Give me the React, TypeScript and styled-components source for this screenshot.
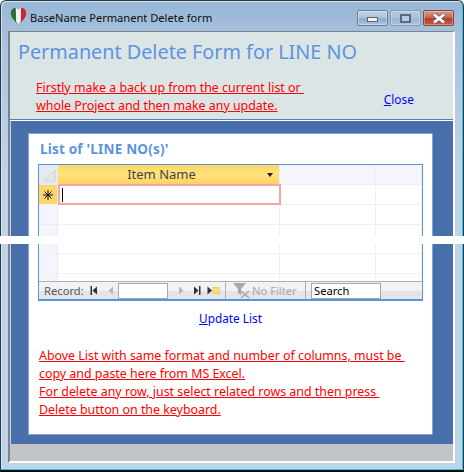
import styled, { createGlobalStyle } from 'styled-components';

const GlobalStyle = createGlobalStyle`
  html, body {
    margin: 0;
    padding: 0;
    background: #fff;
    overflow: hidden;
  }
  * {
    box-sizing: border-box;
  }
`;

const FONT = '"Noto Sans", "Open Sans", sans-serif';

const App = () => {
  return (
    <Window>
      <GlobalStyle />
      <TitleBar>
        <AppIcon viewBox="0 0 17 18">
          <path d="M8.5 17.5 C4 13.5 0.8 10.5 0.8 6 C0.8 3 2.8 1 5.2 1 C6.6 1 7.8 1.7 8.5 3 L8.5 17.5Z" fill="#2c6e35" />
          <path d="M5.8 1.1 C7 1.3 7.9 1.9 8.5 3 C9.1 1.9 10 1.3 11.2 1.1 L10.9 14.6 L8.5 17.5 L6.1 14.6Z" fill="#f4f4f0" />
          <path d="M8.5 17.5 C13 13.5 16.2 10.5 16.2 6 C16.2 3 14.2 1 11.8 1 L10.9 1.1 L10.9 14.6Z" fill="#c9282b" />
        </AppIcon>
        <WindowTitle>BaseName Permanent Delete form</WindowTitle>
        <WindowControls>
          <ControlButton>
            <MinimizeGlyph />
          </ControlButton>
          <ControlButton $faded>
            <MaximizeGlyph />
          </ControlButton>
          <ControlButton $danger>
            <svg width="16" height="11" viewBox="0 0 16 11">
              <path d="M3 1.5 L13 9.5 M13 1.5 L3 9.5" stroke="#6b6260" strokeWidth="4.4" />
              <path d="M3 1.5 L13 9.5 M13 1.5 L3 9.5" stroke="#fff" strokeWidth="2.8" />
            </svg>
          </ControlButton>
        </WindowControls>
      </TitleBar>

      <ClientArea>
        <FormHeader>
          <FormTitle>Permanent Delete Form for LINE NO</FormTitle>
          <HeaderRow>
            <div>
              <WarningLine>{'Firstly make a back up from the current list or '}</WarningLine>
              <WarningLine>whole Project and then make any update.</WarningLine>
            </div>
            <ActionLink>
              <u>C</u>lose
            </ActionLink>
          </HeaderRow>
        </FormHeader>

        <DetailSection>
          <Card>
            <ListTitle>List of 'LINE NO(s)'</ListTitle>
            <Datasheet>
              <HeaderGridRow>
                <CornerCell>
                  <svg width="18" height="18" viewBox="0 0 18 18">
                    <path d="M4 15 L15 4 L15 15Z" fill="#e4e6ea" stroke="#d0d3d8" />
                  </svg>
                </CornerCell>
                <ColumnHead>
                  Item Name
                  <SortArrow />
                </ColumnHead>
                <EmptyHead $width={96} />
                <EmptyHead />
              </HeaderGridRow>
              <GridRow $height={20}>
                <RowSelector $active>
                  <svg width="10" height="10" viewBox="0 0 10 10">
                    <path d="M5 0 V10 M0 5 H10 M1.5 1.5 L8.5 8.5 M8.5 1.5 L1.5 8.5" stroke="#111" strokeWidth="1" />
                  </svg>
                </RowSelector>
                <ActiveCell>
                  <Caret />
                </ActiveCell>
                <Cell $width={96} />
                <Cell />
              </GridRow>
              {[20, 29, 20, 7].map((height, i) => (
                <GridRow key={i} $height={height} $last={i === 3}>
                  <RowSelector />
                  <Cell $width={222} />
                  <Cell $width={96} />
                  <Cell />
                </GridRow>
              ))}
              <NavBar>
                <NavLabel>Record:</NavLabel>
                <NavIcon $dark $gap={9} viewBox="0 0 8 9">
                  <path d="M0.5 0 H2 V9 H0.5Z M7 0.5 V8.5 L2.5 4.5Z" />
                </NavIcon>
                <NavIcon $gap={3} viewBox="0 0 8 9">
                  <path d="M6 0.5 V8.5 L1.5 4.5Z" />
                </NavIcon>
                <RecordBox />
                <NavIcon $gap={8} viewBox="0 0 8 9">
                  <path d="M2 0.5 V8.5 L6.5 4.5Z" />
                </NavIcon>
                <NavIcon $dark $gap={6} viewBox="0 0 8 9">
                  <path d="M1 0.5 V8.5 L5.5 4.5Z M6 0 H7.5 V9 H6Z" />
                </NavIcon>
                <NewRecordIcon viewBox="0 0 13 9">
                  <path d="M0.5 0.5 V8.5 L5 4.5Z" fill="#2e3338" />
                  <rect x="5.5" y="1" width="7" height="7" fill="#f2c230" />
                  <path d="M5.5 3.3 H12.5 M5.5 5.7 H12.5 M7.8 1 V8 M10.2 1 V8" stroke="#fff3c0" strokeWidth="0.8" />
                </NewRecordIcon>
                <FilterSection>
                  <svg width="18" height="17" viewBox="0 0 18 17">
                    <path d="M0 1 H13 L8 7 V13 L5 11 V7Z" fill="#a6a8ab" />
                    <path d="M8 9 L16 16 M16 9 L8 16" stroke="#a6a8ab" strokeWidth="1.6" />
                  </svg>
                  No Filter
                </FilterSection>
                <SearchBox>Search</SearchBox>
              </NavBar>
            </Datasheet>
            <UpdateRow>
              <ActionLink>
                <u>U</u>pdate List
              </ActionLink>
            </UpdateRow>
            <Notes>
              <WarningLine>{'Above List with same format and number of columns, must be '}</WarningLine>
              <WarningLine>copy and paste here from MS Excel.</WarningLine>
              <WarningLine>{'For delete any row, just select related rows and then press '}</WarningLine>
              <WarningLine>Delete button on the keyboard.</WarningLine>
            </Notes>
          </Card>
        </DetailSection>
        <FormFooter />
      </ClientArea>
      <TornStrip />
    </Window>
  );
};

const Window = styled.div`
  position: relative;
  width: 464px;
  height: 472px;
  padding: 0 8px 7px 1px;
  display: flex;
  flex-direction: column;
  font-family: ${FONT};
  background: linear-gradient(#98b6d6 0, #a9c3de 40px, #bcd3e9 160px, #bcd4ea 100%);
  border: 1px solid #2b3640;
  border-bottom: 2px solid #0a0a0a;
  border-top-left-radius: 6px;
  border-top-right-radius: 6px;
  box-shadow: inset -1px -1px 0 #35c4e0, inset 1px 1px 0 #d5e3f0;
`;

const TitleBar = styled.div`
  height: 30px;
  flex: none;
  display: flex;
  align-items: center;
  padding-left: 8px;
`;

const AppIcon = styled.svg`
  width: 17px;
  height: 18px;
  flex: none;
`;

const WindowTitle = styled.div`
  margin-left: 3px;
  margin-top: 2px;
  font-size: 11.1px;
  color: #0c0c0c;
  white-space: nowrap;
`;

const WindowControls = styled.div`
  margin-left: auto;
  margin-top: 4px;
  margin-right: 1px;
  display: flex;
  gap: 2px;
`;

const ControlButton = styled.div<{ $danger?: boolean; $faded?: boolean }>`
  width: 31px;
  height: 16px;
  display: flex;
  align-items: center;
  justify-content: center;
  border: 1px solid ${(p) => (p.$danger ? '#7d4a44' : p.$faded ? '#8099b5' : '#65809c')};
  border-radius: 2px;
  background: ${(p) =>
    p.$danger
      ? 'linear-gradient(#d99a8c 0, #c9614e 50%, #b03a28 55%, #c8604c 100%)'
      : p.$faded
        ? 'linear-gradient(#b5cbe2 0, #a8c0da 50%, #9cb6d3 55%, #a8c4e0 100%)'
        : 'linear-gradient(#c1d4e8 0, #a9c1dc 50%, #8fabcb 55%, #a8c4e0 100%)'};
  box-shadow: inset 0 0 0 1px rgba(255, 255, 255, 0.3);
`;

const MinimizeGlyph = styled.span`
  width: 11px;
  height: 5px;
  margin-top: 3px;
  background: #f2f4f6;
  border: 1px solid #55677a;
`;

const MaximizeGlyph = styled.span`
  width: 11px;
  height: 9px;
  background: #b7cbe0;
  border: 2px solid #5a6b7e;
`;

const ClientArea = styled.div`
  flex: 1;
  margin-left: 6px;
  display: flex;
  flex-direction: column;
  border-top: 1px solid #7d8388;
  border-left: 2px solid #7d8388;
  border-right: 2px solid #fff;
  border-bottom: 2px solid #fff;
`;

const FormHeader = styled.div`
  height: 88px;
  flex: none;
  padding: 6px 0 0 8px;
  background: #dce5e6;
  border-bottom: 1px solid #5c7fa8;
`;

const FormTitle = styled.div`
  font-size: 19.8px;
  line-height: 28px;
  color: #5c94dd;
  white-space: nowrap;
`;

const HeaderRow = styled.div`
  margin-top: 13px;
  padding-left: 18px;
  display: flex;
  align-items: center;
`;

const WarningLine = styled.div`
  height: 18px;
  font-size: 12.4px;
  line-height: 17px;
  color: #ff0000;
  white-space: pre;
  text-decoration: underline;
`;

const ActionLink = styled.a`
  display: block;
  font-size: 11.8px;
  line-height: 16px;
  color: #0000ff;
  white-space: nowrap;
  cursor: pointer;
  ${HeaderRow} & {
    margin-left: 80px;
    margin-top: 4px;
  }
`;

const DetailSection = styled.div`
  flex: 1;
  display: flex;
  padding: 12px 21px 9px 17px;
  background: #486fa9;
  border-top: 1px solid #fff;
  border-left: 1px solid #c9d3de;
`;

const Card = styled.div`
  flex: 1;
  padding: 6px 9px 0;
  background: #fff;
  border: 1px solid #7ea6d8;
`;

const ListTitle = styled.div`
  height: 24px;
  padding-left: 2px;
  font-size: 13.5px;
  font-weight: 700;
  letter-spacing: 0.2px;
  line-height: 18px;
  color: #5c94dd;
`;

const Datasheet = styled.div`
  width: 385px;
  height: 137px;
  display: flex;
  flex-direction: column;
  border: 1px solid #5b93dc;
  border-bottom-width: 2px;
  background: #fff;
`;

const GridRow = styled.div<{ $height: number; $last?: boolean }>`
  height: ${(p) => p.$height}px;
  flex: none;
  display: flex;
  border-bottom: ${(p) => (p.$last ? 'none' : '1px solid #f0f0f2')};
`;

const HeaderGridRow = styled.div`
  height: 20px;
  flex: none;
  display: flex;
`;

const CornerCell = styled.div`
  width: 19px;
  flex: none;
  display: flex;
  align-items: center;
  justify-content: center;
  background: #e6e9ef;
`;

const ColumnHead = styled.div`
  position: relative;
  width: 222px;
  flex: none;
  padding-right: 14px;
  font-size: 13px;
  line-height: 19px;
  text-align: center;
  color: #444;
  background: linear-gradient(#fbd966, #ffe27d 50%, #fdd25c);
  border-right: 1px solid #eee;
`;

const SortArrow = styled.span`
  position: absolute;
  right: 6px;
  top: 8px;
  border-left: 3.5px solid transparent;
  border-right: 3.5px solid transparent;
  border-top: 4px solid #222;
`;

const EmptyHead = styled.div<{ $width?: number }>`
  ${(p) => (p.$width ? `width: ${p.$width}px; flex: none;` : 'flex: 1;')}
  background: #f5f6fd;
  border-right: 1px solid #eceef4;
  border-bottom: 1px solid #eceef4;
`;

const RowSelector = styled.div<{ $active?: boolean }>`
  width: 19px;
  flex: none;
  display: flex;
  align-items: center;
  justify-content: center;
  background: ${(p) => (p.$active ? '#fdd667' : '#f5f6fd')};
  border-right: 1px solid #eaebf0;
`;

const Cell = styled.div<{ $width?: number }>`
  ${(p) => (p.$width ? `width: ${p.$width}px; flex: none;` : 'flex: 1;')}
  border-right: 1px solid #f0f0f2;
`;

const ActiveCell = styled.div`
  width: 223px;
  height: 21px;
  flex: none;
  margin: -1px -1px 0 0;
  padding: 2px 1px;
  border: 2px solid #f3a5a8;
  background: #fff;
  z-index: 1;
`;

const Caret = styled.div`
  width: 1px;
  height: 14px;
  margin-left: 1px;
  background: #000;
`;

const NavBar = styled.div`
  height: 18px;
  flex: 1;
  display: flex;
  align-items: center;
  padding-left: 5px;
  background: linear-gradient(#f2f2f3 0, #f2f2f3 50%, #e2e3e6 55%, #e4e5e8 100%);
  border-top: 1px solid #aeb0b3;
`;

const NavLabel = styled.span`
  width: 46px;
  flex: none;
  font-size: 11.2px;
  color: #55595e;
`;

const NavIcon = styled.svg<{ $dark?: boolean; $gap: number }>`
  width: 8px;
  height: 9px;
  flex: none;
  margin-right: ${(p) => p.$gap}px;
  fill: ${(p) => (p.$dark ? '#2e3338' : '#b3b6ba')};
`;

const NewRecordIcon = styled.svg`
  width: 13px;
  height: 9px;
  flex: none;
`;

const RecordBox = styled.div`
  width: 50px;
  height: 16px;
  flex: none;
  margin-right: 9px;
  background: #fff;
  border: 1px solid #a8a8a8;
`;

const FilterSection = styled.div`
  width: 81px;
  height: 100%;
  flex: none;
  margin-left: 5px;
  padding-left: 7px;
  display: flex;
  align-items: center;
  gap: 1px;
  font-size: 11.2px;
  color: #a6a8ab;
  border-left: 1px solid #aeb0b3;
  border-right: 1px solid #aeb0b3;
`;

const SearchBox = styled.div`
  width: 70px;
  height: 16px;
  flex: none;
  margin-left: 5px;
  padding-left: 2px;
  font-size: 11.2px;
  line-height: 14px;
  color: #000;
  background: #fff;
  border: 1px solid #a8a8a8;
`;

const UpdateRow = styled.div`
  margin-top: 9px;
  display: flex;
  justify-content: center;
`;

const Notes = styled.div`
  margin-top: 21px;
  margin-left: 1px;
`;

const FormFooter = styled.div`
  height: 17px;
  flex: none;
  background: #c3c4c7;
`;

const TornStrip = styled.div`
  position: absolute;
  left: -1px;
  right: -1px;
  top: 235px;
  height: 8px;
  background: #fff;
`;

export default App;
